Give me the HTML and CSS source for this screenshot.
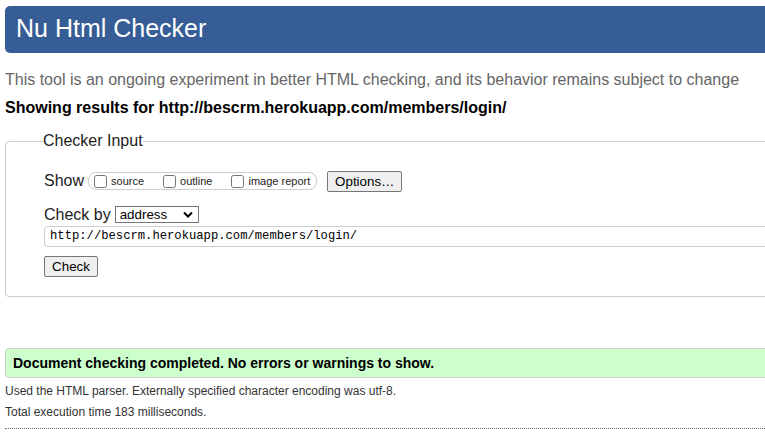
FILE: index.html
```html
<!DOCTYPE html>
<html>
<head>
<meta charset="utf-8">
<link rel="stylesheet" href="styles.css">
<title>Nu Html Checker</title>
</head>
<body>
<div class="page">
  <h1 class="title">Nu Html Checker</h1>
  <p class="intro">This tool is an ongoing experiment in better HTML checking, and its behavior remains subject to change</p>
  <p class="showing">Showing results for http://bescrm.herokuapp.com/members/login/</p>
  <fieldset class="checker">
    <legend class="legend">Checker Input</legend>
    <div class="row show-row">
      <span class="label">Show</span>
      <span class="opts">
        <label class="opt"><input type="checkbox" class="cb">source</label>
        <label class="opt"><input type="checkbox" class="cb">outline</label>
        <label class="opt"><input type="checkbox" class="cb">image report</label>
      </span>
      <button class="btn options-btn">Options…</button>
    </div>
    <div class="row by-row">
      <span class="label">Check by</span>
      <span class="select">address<svg class="chev" width="10" height="7" viewBox="0 0 10 7"><path d="M1 1.5 L5 5.5 L9 1.5" fill="none" stroke="#000" stroke-width="2"/></svg></span>
    </div>
    <div class="url">http://bescrm.herokuapp.com/members/login/</div>
    <button class="btn check-btn">Check</button>
  </fieldset>
  <div class="success">Document checking completed. No errors or warnings to show.</div>
  <p class="meta">Used the HTML parser. Externally specified character encoding was utf-8.</p>
  <p class="meta">Total execution time 183 milliseconds.</p>
  <hr class="dots">
</div>
</body>
</html>
```
FILE: styles.css
```css
html { overflow: hidden; }
body {
  margin: 0;
  font-family: "Liberation Sans", Arial, sans-serif;
  color: #000;
  background: #fff;
}
.page {
  padding-left: 5px;
  width: 800px;
}
.title {
  margin: 6px 0 0 0;
  height: 47px;
  box-sizing: border-box;
  padding: 0 0 0 11px;
  background: #365d95;
  color: #fff;
  font-weight: normal;
  font-size: 25px;
  line-height: 45px;
  border-radius: 5px;
}
.intro {
  margin: 17px 0 0 0;
  font-size: 16px;
  line-height: 20px;
  color: #666;
}
.showing {
  margin: 8px 0 0 0;
  font-size: 16px;
  line-height: 20px;
  font-weight: bold;
}
.checker {
  margin: 14px 0 0 0;
  padding: 20px 0 19px 38px;
  border: 1px solid #ccc;
  border-radius: 4px;
  min-width: 0;
}
.legend {
  padding: 0;
  margin-left: -1px;
  font-size: 16px;
  color: #222;
}
.row {
  display: flex;
  align-items: center;
}
.label {
  font-size: 16px;
  color: #222;
}
.show-row {
  height: 22px;
}
.opts {
  margin-left: 4px;
  display: flex;
  align-items: flex-end;
  height: 18px;
  box-sizing: border-box;
  border: 1px solid #ccc;
  border-radius: 8px;
  padding: 0 6px 1px 5px;
  gap: 19px;
}
.opt {
  display: flex;
  align-items: flex-end;
  font-size: 11px;
  line-height: 13px;
  color: #222;
}
.cb {
  margin: 0 4px 0 0;
  width: 13px;
  height: 13px;
}
.btn {
  font-family: "Liberation Sans", Arial, sans-serif;
  font-size: 13.33px;
  background: #efefef;
  border: 1px solid #767676;
  border-radius: 2px;
  padding: 1px 6px;
  color: #000;
  height: 21px;
  line-height: 17px;
}
.options-btn {
  margin-left: 10px;
  width: 75px;
}
.by-row {
  margin-top: 13px;
  height: 19px;
}
.select {
  margin-left: 4px;
  display: inline-flex;
  align-items: center;
  justify-content: space-between;
  width: 84px;
  height: 17px;
  box-sizing: border-box;
  border: 1px solid #767676;
  border-radius: 0;
  padding: 0 5px 0 4px;
  font-size: 13.33px;
}
.url {
  margin-top: 2px;
  height: 21px;
  box-sizing: border-box;
  border: 1px solid #ccc;
  border-radius: 4px;
  padding: 0 5px;
  font-family: "Liberation Mono", "Courier New", monospace;
  font-size: 12.2px;
  line-height: 19px;
  color: #000;
}
.check-btn {
  margin-top: 9px;
  width: 54px;
  display: block;
}
.success {
  margin-top: 51px;
  height: 30px;
  box-sizing: border-box;
  border: 1px solid #ccc;
  border-radius: 4px;
  background: #ccffcc;
  padding-left: 7px;
  font-size: 14px;
  font-weight: bold;
  line-height: 28px;
}
.meta {
  margin: 5px 0 0 0;
  font-size: 12px;
  line-height: 16px;
  color: #333;
}
.dots {
  margin: 8px 0 0 0;
  border: 0;
  border-top: 1px dotted #666;
  height: 0;
}
```
